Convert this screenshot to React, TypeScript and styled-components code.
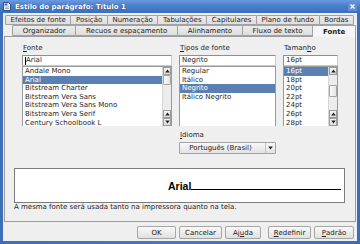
import React from "react";
import styled, { createGlobalStyle } from "styled-components";

const Global = createGlobalStyle`
  html, body { margin: 0; padding: 0; background: #3a6cb4; }
  body {
    width: 360px; height: 244px; overflow: hidden;
    font-family: "DejaVu Sans", "Liberation Sans", sans-serif;
    font-size: 7px; color: #1e1e1e;
  }
  * { box-sizing: border-box; }
  u { text-decoration-thickness: 1px; text-underline-offset: 1px; }
`;

const Window = styled.div`
  width: 360px; height: 244px;
  display: flex; flex-direction: column;
  background: linear-gradient(90deg, #3d70ba, #4679c2 50%, #3a6db7);
`;

const TitleBar = styled.div`
  height: 13px; flex: none;
  display: flex; align-items: center; gap: 4px;
  padding: 0 3px 0 3px;
  background: linear-gradient(#6a9be0, #4a7fcb 45%, #3b6fbb);
`;

const TitleText = styled.span`
  flex: 1;
  color: #ffffff;
  font-weight: bold;
  font-size: 7px;
  text-shadow: 0 0 1px rgba(0,0,40,0.6);
  white-space: nowrap;
`;

const CloseBtn = styled.div`
  width: 9px; height: 9px;
  display: flex; align-items: center; justify-content: center;
  background: #5d8fd4;
  border-radius: 1px;
`;

const Body = styled.div`
  flex: 1;
  margin: 0 3px 3px 3px;
  background: #efefef;
  display: flex; flex-direction: column;
  padding-top: 2px;
`;

const TabRow = styled.div<{ $left: number; $right: number; $h: number }>`
  display: flex;
  height: ${(p) => p.$h}px;
  margin: 0 ${(p) => p.$right}px 0 ${(p) => p.$left}px;
  position: relative;
  z-index: ${(p) => (p.$h > 10 ? 2 : 1)};
`;

const Tab = styled.div<{ $active?: boolean }>`
  flex: 1 1 auto;
  display: flex; align-items: center; justify-content: center;
  padding: 0 3px;
  margin-left: -1px;
  white-space: nowrap;
  font-size: 7px;
  border: 1px solid #a2a2a2;
  border-bottom: ${(p) => (p.$active ? "none" : "1px solid #a2a2a2")};
  background: ${(p) => (p.$active ? "#f6f6f6" : "linear-gradient(#ececec, #dedede)")};
  font-weight: ${(p) => (p.$active ? "bold" : "normal")};
  color: #222;
  height: ${(p) => (p.$active ? "12px" : "100%")};
  border-radius: 1px 1px 0 0;
`;

const Panel = styled.div`
  flex: 1;
  margin: 0 1px;
  border: 1px solid #9c9c9c;
  background: #efefef;
  display: flex; flex-direction: column;
  padding-top: 7px;
`;

const TopGrid = styled.div`
  display: grid;
  grid-template-columns: 150px 97px 55px;
  column-gap: 7px;
  padding-left: 17px;
`;

const Column = styled.div<{ $col?: number }>`
  display: flex; flex-direction: column;
  grid-column: ${(p) => p.$col ?? "auto"};
`;

const Label = styled.div<{ $top?: number }>`
  height: 9px; line-height: 9px;
  margin-top: ${(p) => p.$top ?? 0}px;
  margin-bottom: 2px;
  padding-left: 1px;
  white-space: nowrap;
`;

const Input = styled.div`
  height: 11px;
  background: #ffffff;
  border: 1px solid #8f8f8f;
  border-right-color: #c9c9c9;
  border-bottom-color: #c9c9c9;
  display: flex; align-items: center;
  padding-left: 2px;
  line-height: 9px;
`;

const Caret = styled.span`
  display: inline-block;
  width: 0; height: 8px;
  border-left: 1px solid #000;
`;

const ListBox = styled.div`
  height: 60px;
  background: #ffffff;
  border: 1px solid #9a9a9a;
  border-bottom: none;
  display: flex;
  overflow: hidden;
`;

const Rows = styled.div`
  flex: 1;
  display: flex; flex-direction: column;
  min-width: 0;
`;

const Row = styled.div<{ $sel?: boolean }>`
  flex: none;
  height: 8.6px; line-height: 8.6px;
  padding-left: 2px;
  white-space: nowrap;
  background: ${(p) => (p.$sel ? "#5a7fb3" : "transparent")};
  color: ${(p) => (p.$sel ? "#ffffff" : "#1e1e1e")};
`;

const ScrollTrack = styled.div`
  width: 9px; flex: none;
  display: flex; flex-direction: column;
  background: #ececec;
  border-left: 1px solid #d6d6d6;
`;

const ArrowBtn = styled.div`
  height: 8px; flex: none;
  display: flex; align-items: center; justify-content: center;
  background: linear-gradient(#f6f6f6, #dcdcdc);
  border: 1px solid #9c9c9c;
`;

const Gap = styled.div<{ $h?: number }>`
  flex: ${(p) => (p.$h === undefined ? "1" : "none")};
  height: ${(p) => (p.$h === undefined ? "auto" : `${p.$h}px`)};
`;

const Thumb = styled.div<{ $h: number }>`
  height: ${(p) => p.$h}px; flex: none;
  background: linear-gradient(90deg, #fafafa, #e4e4e4);
  border: 1px solid #a4a4a4;
  border-radius: 1px;
`;

const Select = styled.div`
  height: 12px;
  display: flex;
  border: 1px solid #a3a3a3;
  border-radius: 1px;
  background: linear-gradient(#f8f8f8, #e2e2e2);
`;

const SelectText = styled.div`
  flex: 1;
  display: flex; align-items: center; justify-content: center;
  padding-right: 4px;
  white-space: nowrap;
`;

const SelectArrow = styled.div`
  width: 10px;
  display: flex; align-items: center; justify-content: center;
  border-left: 1px solid #c4c4c4;
`;

const Preview = styled.div`
  margin: 14px 10px 0 9px;
  height: 35px;
  background: #ffffff;
  border: 1px solid #7c7c7c;
  display: flex; align-items: flex-end; justify-content: center;
  padding: 0 3px 10px 0;
`;

const PreviewText = styled.span`
  font-family: "Liberation Sans", Arial, sans-serif;
  font-weight: bold;
  font-size: 10.5px;
  line-height: 11px;
  color: #000;
  margin-left: 153px;
`;

const BaseLine = styled.div`
  flex: 1;
  height: 1px;
  background: #000;
  margin-bottom: 2px;
`;

const Note = styled.div`
  padding-left: 9px;
  height: 9px; line-height: 9px;
  margin-top: 0px;
  white-space: nowrap;
`;

const ButtonRow = styled.div`
  height: 19px; flex: none;
  display: flex; justify-content: flex-end; gap: 3px;
  padding: 4px 3px 2px 0;
`;

const Button = styled.div<{ $w: number; $spaced?: boolean }>`
  width: ${(p) => p.$w}px;
  margin-left: ${(p) => (p.$spaced ? 4 : 0)}px;
  height: 13px;
  display: flex; align-items: center; justify-content: center;
  border: 1px solid #a6a6a6;
  border-radius: 2px;
  background: linear-gradient(#f9f9f9, #e0e0e0);
  color: #222;
`;

const Up = () => (
  <svg width="5" height="4" viewBox="0 0 5 4"><path d="M2.5 0.5 L4.8 3.5 L0.2 3.5 Z" fill="#222" /></svg>
);
const Down = () => (
  <svg width="5" height="4" viewBox="0 0 5 4"><path d="M0.2 0.5 L4.8 0.5 L2.5 3.5 Z" fill="#222" /></svg>
);

const Scrollbar: React.FC<{ before: number; thumb: number }> = ({ before, thumb }) => (
  <ScrollTrack>
    <ArrowBtn><Up /></ArrowBtn>
    <Gap $h={before} />
    <Thumb $h={thumb} />
    <Gap />
    <ArrowBtn><Up /></ArrowBtn>
    <ArrowBtn><Down /></ArrowBtn>
  </ScrollTrack>
);

const fonts = [
  "Andale Mono",
  "Arial",
  "Bitstream Charter",
  "Bitstream Vera Sans",
  "Bitstream Vera Sans Mono",
  "Bitstream Vera Serif",
  "Century Schoolbook L",
];
const styles = ["Regular", "Itálico", "Negrito", "Itálico Negrito"];
const sizes = ["16pt", "18pt", "20pt", "22pt", "24pt", "26pt", "28pt"];

const row1 = ["Efeitos de fonte", "Posição", "Numeração", "Tabulações", "Capitulares", "Plano de fundo", "Bordas"];
const row2 = ["Organizador", "Recuos e espaçamento", "Alinhamento", "Fluxo de texto", "Fonte"];

export default function App() {
  return (
    <>
      <Global />
      <Window>
        <TitleBar>
          <svg width="8" height="9" viewBox="0 0 8 9">
            <path d="M0.5 0.5 H5.5 L7.5 2.5 V8.5 H0.5 Z" fill="#f4f6fa" stroke="#2d4f86" strokeWidth="1" />
            <rect x="1.5" y="1.5" width="3" height="2" fill="#3d6fb6" />
            <path d="M2 5 H6 M2 6.5 H6" stroke="#7d93b8" strokeWidth="0.8" />
          </svg>
          <TitleText>Estilo do parágrafo: Título 1</TitleText>
          <CloseBtn>
            <svg width="5" height="5" viewBox="0 0 5 5">
              <path d="M0.5 0.5 L4.5 4.5 M4.5 0.5 L0.5 4.5" stroke="#ffffff" strokeWidth="1.2" />
            </svg>
          </CloseBtn>
        </TitleBar>
        <Body>
          <TabRow $left={3} $right={3} $h={10}>
            {row1.map((t) => (
              <Tab key={t}>{t}</Tab>
            ))}
          </TabRow>
          <TabRow $left={10} $right={1} $h={11}>
            {row2.map((t) => (
              <Tab key={t} $active={t === "Fonte"}>{t}</Tab>
            ))}
          </TabRow>
          <Panel>
            <TopGrid>
              <Column>
                <Label><u>F</u>onte</Label>
                <Input><Caret />Arial</Input>
                <ListBox>
                  <Rows>
                    {fonts.map((f) => (
                      <Row key={f} $sel={f === "Arial"}>{f}</Row>
                    ))}
                  </Rows>
                  <Scrollbar before={0} thumb={10} />
                </ListBox>
              </Column>
              <Column>
                <Label><u>T</u>ipos de fonte</Label>
                <Input>Negrito</Input>
                <ListBox>
                  <Rows>
                    {styles.map((s) => (
                      <Row key={s} $sel={s === "Negrito"}>{s}</Row>
                    ))}
                  </Rows>
                </ListBox>
              </Column>
              <Column>
                <Label>Taman<u>h</u>o</Label>
                <Input>16pt</Input>
                <ListBox>
                  <Rows>
                    {sizes.map((s) => (
                      <Row key={s} $sel={s === "16pt"}>{s}</Row>
                    ))}
                  </Rows>
                  <Scrollbar before={10} thumb={12} />
                </ListBox>
              </Column>
              <Column $col={2}>
                <Label $top={5}><u>I</u>dioma</Label>
                <Select>
                  <SelectText>Português (Brasil)</SelectText>
                  <SelectArrow><Down /></SelectArrow>
                </Select>
              </Column>
            </TopGrid>
            <Preview>
              <PreviewText>Arial</PreviewText>
              <BaseLine />
            </Preview>
            <Note>A mesma fonte será usada tanto na impressora quanto na tela.</Note>
          </Panel>
          <ButtonRow>
            <Button $w={39}>OK</Button>
            <Button $w={43}>Cancelar</Button>
            <Button $w={36}>Aj<u>u</u>da</Button>
            <Button $w={43} $spaced><u>R</u>edefinir</Button>
            <Button $w={40}><u>P</u>adrão</Button>
          </ButtonRow>
        </Body>
      </Window>
    </>
  );
}
